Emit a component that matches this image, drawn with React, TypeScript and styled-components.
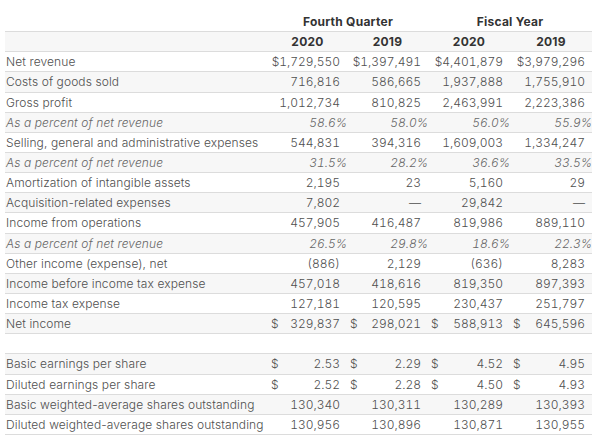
import React from "react";
import styled, { createGlobalStyle } from "styled-components";

const Global = createGlobalStyle`
  html, body { margin: 0; padding: 0; background: #fff; }
  body { font-family: Inter, "Liberation Sans", Arial, sans-serif; }
`;

const Wrap = styled.div`
  padding: 12px 0 0 5px;
  width: 587px;
`;

const Table = styled.div`
  width: 587px;
  overflow: hidden;
  font-size: 12px;
  font-weight: 300;
  color: #4f4f4f;
`;

const Row = styled.div<{ $shade?: boolean }>`
  display: grid;
  grid-template-columns: 263px 79px 81px 82px 82px;
  height: 20.15px;
  box-sizing: border-box;
  align-items: center;
  background: ${(p) => (p.$shade ? "#f7f7f7" : "#fff")};
  border-bottom: 1px solid #dcdcdc;
`;

const Label = styled.div<{ $italic?: boolean }>`
  padding-left: 1px;
  white-space: nowrap;
  letter-spacing: 0.1px;
  font-style: ${(p) => (p.$italic ? "italic" : "normal")};
  color: ${(p) => (p.$italic ? "#666" : "#4f4f4f")};
`;

const Group = styled.div<{ $span: string }>`
  grid-column: ${(p) => p.$span};
  text-align: center;
  font-weight: 700;
  letter-spacing: 0.25px;
  color: #333;
`;

const Year = styled.div`
  text-align: center;
  font-weight: 700;
  letter-spacing: 0.25px;
  color: #333;
`;

const Num = styled.div<{ $pct?: boolean }>`
  display: flex;
  justify-content: space-between;
  white-space: nowrap;
  font-variant-numeric: tabular-nums;
  padding: 0 ${(p) => (p.$pct ? "0" : "7px")} 0 3px;
  font-style: ${(p) => (p.$pct ? "italic" : "normal")};
  color: ${(p) => (p.$pct ? "#666" : "#4f4f4f")};
`;

const Value = styled.span`
  margin-left: auto;
`;

type RowData = { label: string; vals: string[]; pct?: boolean; dollar?: boolean };

const main: RowData[] = [
  { label: "Net revenue", vals: ["$1,729,550", "$1,397,491", "$4,401,879", "$3,979,296"] },
  { label: "Costs of goods sold", vals: ["716,816", "586,665", "1,937,888", "1,755,910"] },
  { label: "Gross profit", vals: ["1,012,734", "810,825", "2,463,991", "2,223,386"] },
  { label: "As a percent of net revenue", vals: ["58.6%", "58.0%", "56.0%", "55.9%"], pct: true },
  { label: "Selling, general and administrative expenses", vals: ["544,831", "394,316", "1,609,003", "1,334,247"] },
  { label: "As a percent of net revenue", vals: ["31.5%", "28.2%", "36.6%", "33.5%"], pct: true },
  { label: "Amortization of intangible assets", vals: ["2,195", "23", "5,160", "29"] },
  { label: "Acquisition-related expenses", vals: ["7,802", "—", "29,842", "—"] },
  { label: "Income from operations", vals: ["457,905", "416,487", "819,986", "889,110"] },
  { label: "As a percent of net revenue", vals: ["26.5%", "29.8%", "18.6%", "22.3%"], pct: true },
  { label: "Other income (expense), net", vals: ["(886)", "2,129", "(636)", "8,283"] },
  { label: "Income before income tax expense", vals: ["457,018", "418,616", "819,350", "897,393"] },
  { label: "Income tax expense", vals: ["127,181", "120,595", "230,437", "251,797"] },
  { label: "Net income", vals: ["329,837", "298,021", "588,913", "645,596"], dollar: true },
];

const eps: RowData[] = [
  { label: "Basic earnings per share", vals: ["2.53", "2.29", "4.52", "4.95"], dollar: true },
  { label: "Diluted earnings per share", vals: ["2.52", "2.28", "4.50", "4.93"], dollar: true },
  { label: "Basic weighted-average shares outstanding", vals: ["130,340", "130,311", "130,289", "130,393"] },
  { label: "Diluted weighted-average shares outstanding", vals: ["130,956", "130,896", "130,871", "130,955"] },
];

const DataRow = ({ r, shade }: { r: RowData; shade: boolean }) => (
  <Row $shade={shade}>
    <Label $italic={r.pct}>{r.label}</Label>
    {r.vals.map((v, i) => (
      <Num key={i} $pct={r.pct}>
        {r.dollar && <span>$</span>}
        <Value>{v}</Value>
      </Num>
    ))}
  </Row>
);

export default function App() {
  return (
    <>
      <Global />
      <Wrap>
        <Table>
          <Row>
            <div />
            <Group $span="2 / 4">Fourth Quarter</Group>
            <Group $span="4 / 6">Fiscal Year</Group>
          </Row>
          <Row $shade>
            <div />
            <Year>2020</Year>
            <Year>2019</Year>
            <Year>2020</Year>
            <Year>2019</Year>
          </Row>
          {main.map((r, i) => (
            <DataRow key={i} r={r} shade={i % 2 === 1} />
          ))}
          <Row />
          {eps.map((r, i) => (
            <DataRow key={i} r={r} shade={i % 2 === 0} />
          ))}
        </Table>
      </Wrap>
    </>
  );
}
